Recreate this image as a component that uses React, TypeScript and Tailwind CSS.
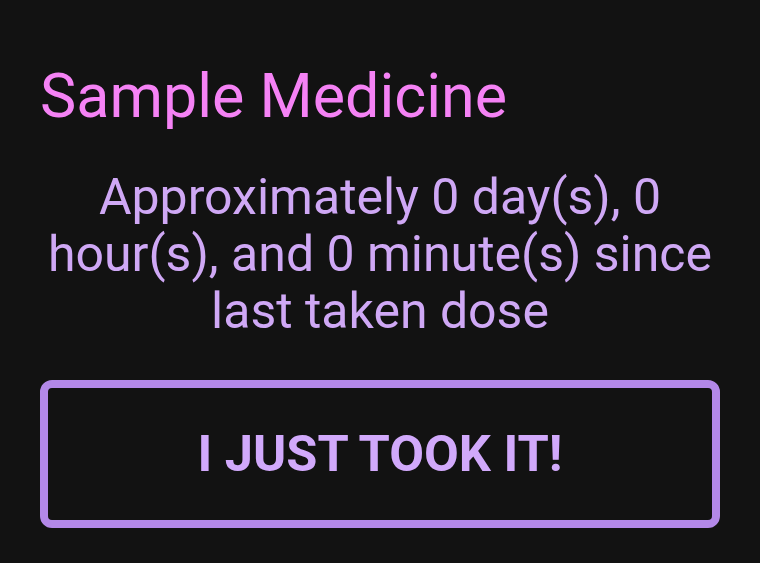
import React from "react";

const App = () => {
  const name = "Sample Medicine";
  const days = 0;
  const hours = 0;
  const minutes = 0;

  return (
    <div className="min-h-[563px] w-full bg-[#121212] px-[40px] pt-[62px] font-['Roboto',sans-serif]">
      <div className="text-[61px] leading-[68px] text-[#f582f5]">{name}</div>
      <div className="mt-[39px] text-center text-[50px] leading-[57px] text-[#cfa8f5]">
        Approximately {days} day(s), {hours} hour(s), and {minutes} minute(s) since last taken dose
      </div>
      <button className="mt-[40px] flex h-[148px] w-full items-center justify-center rounded-[12px] border-[8px] border-[#b388e8] text-[50.5px] font-bold text-[#d1a9fb]">
        I JUST TOOK IT!
      </button>
    </div>
  );
};

export default App;
